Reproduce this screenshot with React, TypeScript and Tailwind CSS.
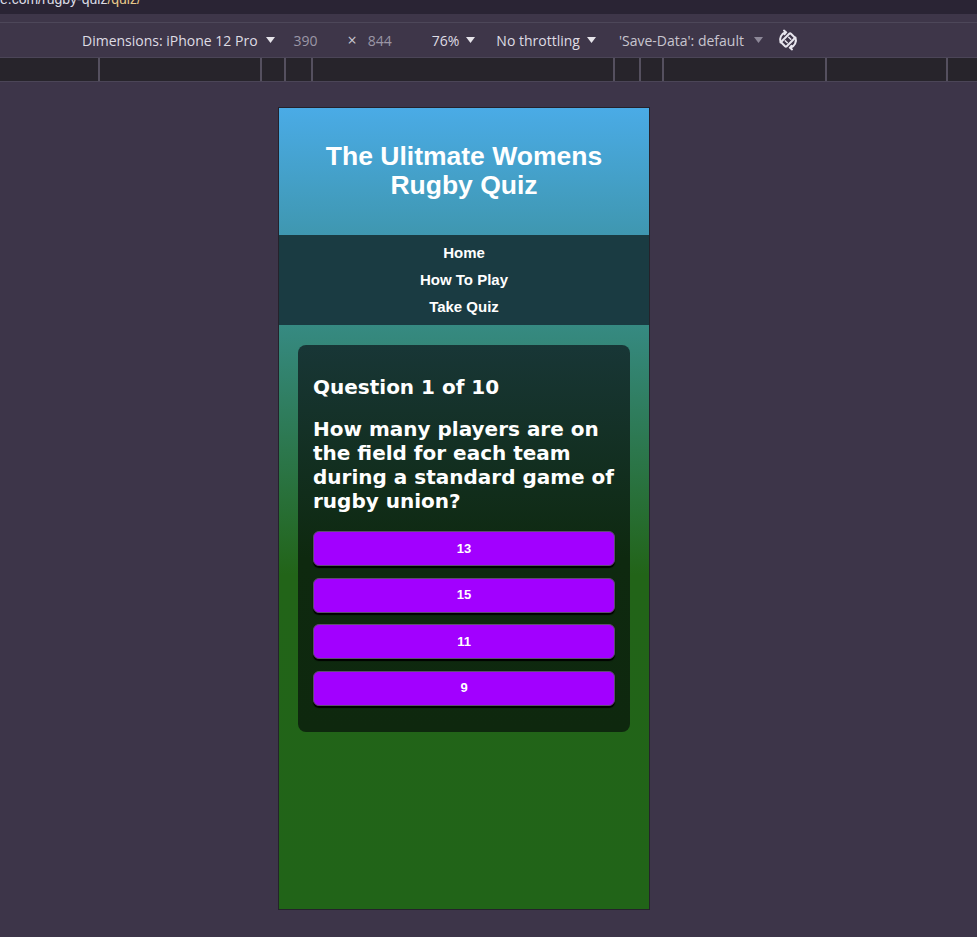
import React from 'react'

const answers = ['13', '15', '11', '9']
const rulerWidths = [100, 162, 24, 27, 302, 26, 23, 163, 121]

function Caret({ dim }: { dim?: boolean }) {
  return (
    <svg width="9" height="6" viewBox="0 0 9 6" className="inline-block">
      <path d="M0 0h9L4.5 6z" fill={dim ? '#8d8898' : '#e6e4ea'} />
    </svg>
  )
}

function RotateIcon() {
  return (
    <svg width="24" height="24" viewBox="0 0 24 24" fill="none" stroke="#e8e6ee" strokeWidth="2" strokeLinecap="round">
      <g transform="rotate(45 12 12)">
        <rect x="8.5" y="5.5" width="7" height="13" rx="1.2" />
        <path d="M10.5 9.5l3 0M10.5 14.5l3 0" strokeWidth="1.4" />
      </g>
      <path d="M4.5 14.5A8 8 0 0 1 9.5 4.3" />
      <path d="M19.5 9.5A8 8 0 0 1 14.5 19.7" />
      <path d="M8 2.6l2 1.7-1.6 2" />
      <path d="M16 21.4l-2-1.7 1.6-2" />
    </svg>
  )
}

export default function App() {
  return (
    <div className="w-[977px] h-[937px] bg-[#3d3549] flex flex-col overflow-hidden font-['Liberation_Sans',Arial,sans-serif]">
      {/* address strip, cut off at the top */}
      <div className="h-[14px] bg-[#2a2434] overflow-hidden">
        <p className="-mt-[9px] text-[14px] leading-[16px] text-[#dcdce4] whitespace-nowrap">
          e.com/rugby-quiz<span className="text-[#e8c98a]">/quiz/</span>
        </p>
      </div>

      {/* device toolbar */}
      <div className="h-[43px] bg-[#3e3649] flex flex-col">
        <div className="h-[8px]" />
        <div className="h-px bg-[#4d4759]" />
        <div className="flex-1 flex items-center text-[14px] text-[#dedce4] font-['Open_Sans',sans-serif]">
          <span className="ml-[82px]">Dimensions: iPhone 12 Pro</span>
          <span className="ml-[8px] flex"><Caret /></span>
          <span className="ml-[19px] text-[#9b96a6]">390</span>
          <span className="ml-[30px] text-[#c9c6d0] text-[16px]">×</span>
          <span className="ml-[11px] text-[#9b96a6]">844</span>
          <span className="ml-[40px]">76%</span>
          <span className="ml-[7px] flex"><Caret /></span>
          <span className="ml-[21px]">No throttling</span>
          <span className="ml-[7px] flex"><Caret /></span>
          <span className="ml-[23px] text-[#c8c5cf]">'Save-Data': default</span>
          <span className="ml-[10px] flex"><Caret dim /></span>
          <span className="ml-[13px] flex"><RotateIcon /></span>
        </div>
      </div>

      {/* media query ruler */}
      <div className="h-[25px] bg-[#27242b] border-t border-b border-[#4b4557] flex">
        {rulerWidths.map((w, i) => (
          <div key={i} className="h-full border-r-2 border-[#55505f]" style={{ width: w }} />
        ))}
      </div>

      {/* canvas */}
      <div className="flex-1 pt-[25px] pl-[278px]">
        <div className="w-[372px] h-[803px] border border-[#25222b] flex flex-col bg-[#216418]">
          <header className="h-[127px] bg-[linear-gradient(#4aabe6,#3f97b0)] flex items-center justify-center pb-[2px]">
            <h1 className="text-center text-white font-bold text-[26.5px] leading-[29px] w-[300px]">
              The Ulitmate Womens Rugby Quiz
            </h1>
          </header>

          <nav className="h-[90px] bg-[#1a3b42] flex flex-col items-center justify-center gap-[9px] text-white font-bold text-[15px] leading-[18px]">
            <span>Home</span>
            <span>How To Play</span>
            <span>Take Quiz</span>
          </nav>

          <main className="flex-1 bg-[linear-gradient(#368a82,#226418_250px,#216418)] px-[19px] pt-[20px]">
            <section className="rounded-[8px] bg-[linear-gradient(#183636,#0e290f_55%,#0e280e)] px-[15px] pt-[30px] pb-[26px] flex flex-col font-['DejaVu_Sans',Verdana,sans-serif] text-white">
              <h2 className="font-bold text-[20px] leading-[24px]">Question 1 of 10</h2>
              <p className="mt-[18px] font-bold text-[20px] leading-[24px]">
                How many players are on the field for each team during a standard game of rugby union?
              </p>
              <div className="mt-[18px] flex flex-col gap-[11.5px]">
                {answers.map((a) => (
                  <button
                    key={a}
                    className="h-[35px] w-full rounded-[6px] bg-[#a200ff] border border-[#5e4d70] shadow-[0_2px_1px_#000] text-white font-bold text-[13px] font-['Liberation_Sans',Arial,sans-serif]"
                  >
                    {a}
                  </button>
                ))}
              </div>
            </section>
          </main>
        </div>
      </div>
    </div>
  )
}
